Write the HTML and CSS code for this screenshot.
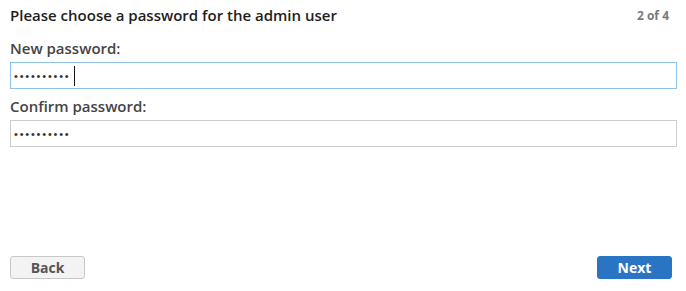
FILE: index.html
```html
<!DOCTYPE html>
<html lang="en">
<head>
    <meta charset="UTF-8">
    <title>Setup - Admin password</title>
    <link rel="stylesheet" href="styles.css">
</head>
<body>

<div class="wizard">
    <!-- Step header -->
    <div class="step-header">
        <h1>Please choose a password for the admin user</h1>
        <span class="step-count">2 of 4</span>
    </div>

    <!-- Password fields -->
    <form class="step-body">
        <label for="newPassword">New password:</label>
        <div class="field">
            <input type="password" id="newPassword" class="active" value="secretpass">
            <span class="caret"></span>
        </div>
        <label for="confirmPassword">Confirm password:</label>
        <div class="field">
            <input type="password" id="confirmPassword" value="secretpass">
        </div>
    </form>

    <!-- Navigation -->
    <div class="step-footer">
        <button class="btn btn-back">Back</button>
        <button class="btn btn-next">Next</button>
    </div>
</div>

</body>
</html>
```
FILE: styles.css
```css
/* General */
body {
    margin: 0;
    font-family: 'Open Sans', 'Liberation Sans', sans-serif;
    color: #222;
    background: #fff;
}

.wizard {
    height: 291px;
    box-sizing: border-box;
    padding: 5px 9px 12px 10px;
    display: flex;
    flex-direction: column;
}

/* Header */
.step-header {
    display: flex;
    justify-content: space-between;
    align-items: center;
}

.step-header h1 {
    font-size: 15px;
    font-weight: 600;
    margin: 0;
    color: #1e1e1e;
}

.step-count {
    font-size: 12px;
    font-weight: 700;
    color: #7a7a7a;
    margin-right: 8px;
}

/* Fields */
.step-body {
    display: flex;
    flex-direction: column;
    margin-top: 13px;
}

.step-body label {
    font-size: 15px;
    font-weight: 600;
    color: #444;
    margin-bottom: 4px;
}

.field {
    position: relative;
    margin-bottom: 7px;
}

.field input {
    width: 100%;
    box-sizing: border-box;
    height: 27px;
    border: 1px solid #cdcdcd;
    padding: 0 3px;
    font-size: 11px;
    color: #333;
    outline: none;
    letter-spacing: 1.8px;
}

.field input.active {
    border-color: #8dc3ea;
}

/* text cursor in the focused field */
.caret {
    position: absolute;
    left: 64px;
    top: 4px;
    width: 1px;
    height: 20px;
    background: #111;
}

/* Footer buttons */
.step-footer {
    margin-top: auto;
    display: flex;
    justify-content: space-between;
    padding-right: 5px;
}

.btn {
    width: 75px;
    height: 23px;
    border-radius: 3px;
    font-family: inherit;
    font-size: 14px;
    font-weight: 700;
    cursor: pointer;
}

.btn-back {
    background: #f3f3f3;
    border: 1px solid #c8c8c8;
    color: #555;
}

.btn-next {
    background: #2a74c4;
    border: 1px solid #2a74c4;
    color: #fff;
}
```
